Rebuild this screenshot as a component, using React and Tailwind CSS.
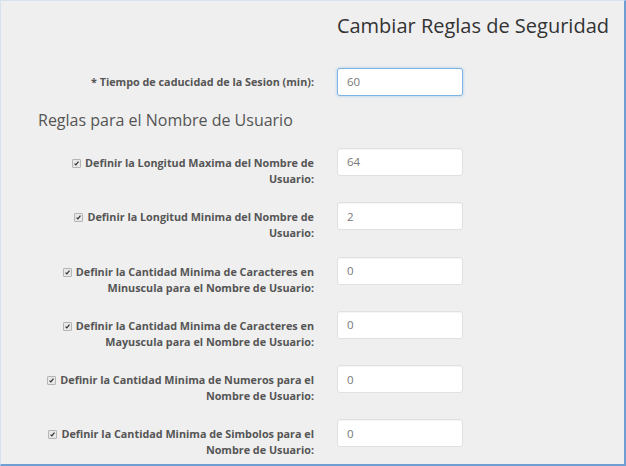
const rows = [
  { label: "Definir la Longitud Maxima del Nombre de Usuario:", value: "64" },
  { label: "Definir la Longitud Minima del Nombre de Usuario:", value: "2" },
  {
    label: "Definir la Cantidad Minima de Caracteres en Minuscula para el Nombre de Usuario:",
    value: "0",
  },
  {
    label: "Definir la Cantidad Minima de Caracteres en Mayuscula para el Nombre de Usuario:",
    value: "0",
  },
  { label: "Definir la Cantidad Minima de Numeros para el Nombre de Usuario:", value: "0" },
  { label: "Definir la Cantidad Minima de Simbolos para el Nombre de Usuario:", value: "0" },
];

function Check() {
  return (
    <span className="inline-block w-[9px] h-[9px] mr-[4px] align-[-1px] rounded-[1px] border border-[#b5b5b5] bg-[#e8e8e8]">
      <svg viewBox="0 0 9 9" className="w-full h-full block">
        <path d="M2 4.6 L3.7 6.3 L7 2.2" fill="none" stroke="#333" strokeWidth="1.6" />
      </svg>
    </span>
  );
}

function Field({ value, focus }) {
  return (
    <div
      className={
        "w-[126px] h-[28px] shrink-0 bg-white rounded-[3px] flex items-center pl-[9px] text-[11.5px] text-[#777] " +
        (focus
          ? "border border-[#7fb3e3] shadow-[0_0_3px_rgba(102,175,233,0.6)]"
          : "border border-[#e0e0e0] shadow-[inset_0_1px_1px_rgba(0,0,0,0.04)]")
      }
    >
      {value}
    </div>
  );
}

export default function App() {
  return (
    <div
      className="w-[626px] h-[466px] overflow-hidden bg-[#efefef] border-t border-l border-[#d6e2f0] border-r-2 border-b-2 border-r-[#6f9fd2] border-b-[#6f9fd2]"
      style={{ fontFamily: '"Open Sans", sans-serif' }}
    >
      <h1 className="pt-[10px] pr-[15px] text-right text-[20px] leading-[30px] text-[#333] font-normal">
        Cambiar Reglas de Seguridad
      </h1>

      <div className="mt-[27px] flex items-center">
        <div className="w-[313px] text-right text-[10.8px] font-bold text-[#555]">
          * Tiempo de caducidad de la Sesion (min):
        </div>
        <div className="ml-[23px]">
          <Field value="60" focus />
        </div>
      </div>

      <h2 className="mt-[12px] pl-[37px] text-[16px] leading-[24px] text-[#555] font-normal">
        Reglas para el Nombre de Usuario
      </h2>

      <div className="mt-[16px] flex flex-col gap-[15.3px]">
        {rows.map((r, i) => (
          <div key={i} className="flex items-start">
            <div className="w-[313px] pl-[40px] pt-[7px] text-right text-[10.8px] leading-[16px] font-bold text-[#555]">
              <Check />
              {r.label}
            </div>
            <div className="ml-[23px]">
              <Field value={r.value} />
            </div>
          </div>
        ))}
      </div>
    </div>
  );
}
